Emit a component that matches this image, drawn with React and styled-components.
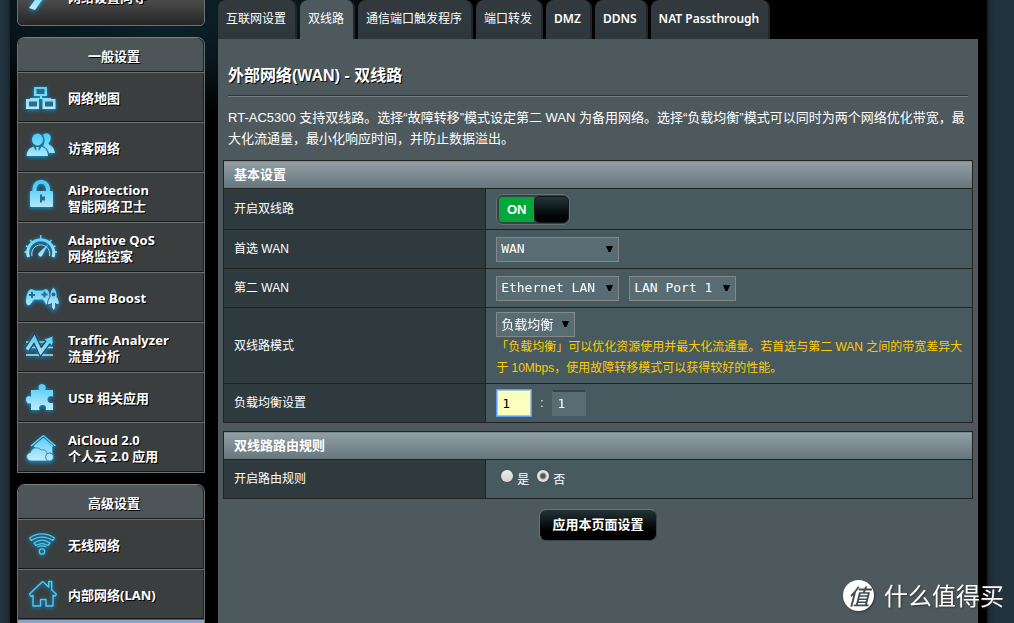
import React, { useState } from "react";
import styled, { createGlobalStyle, css } from "styled-components";

const CJK = '"Noto Sans CJK SC", sans-serif';
const UI = `"Noto Sans", ${CJK}`;
const BODY = `"Liberation Sans", ${CJK}`;
const MONO = `"DejaVu Sans Mono", "Noto Sans CJK SC", monospace`;

const GlobalStyle = createGlobalStyle`
  * { box-sizing: border-box; }
  body { margin: 0; background: #21333e; color: #fff; font: 12px/20px ${BODY}; }
  button, input, select { font: inherit; color: inherit; margin: 0; }
`;

const Page = styled.div`
  height: 100vh;
  overflow: hidden;
  padding: 0 26px 0 10px;
`;

const Shell = styled.div`
  display: flex;
  align-items: stretch;
  gap: 13px;
  height: 100%;
  padding: 0 9px 0 7px;
  border-right: 1px solid #1c1c1c;
  box-shadow: 0 0 5px 1px #131c22;
  background:
    radial-gradient(ellipse 60px 36px at 160px 30px, #0c2026, transparent),
    radial-gradient(ellipse 260px 115px at 150px 0, #0a2229 0, #08161b 60%, transparent),
    #000;
`;

const Sidebar = styled.nav`
  flex: 0 0 188px;
  display: flex;
  flex-direction: column;
  gap: 11px;
`;

const QuickSlot = styled.div`
  flex: none;
  display: flex;
  flex-direction: column;
  justify-content: flex-end;
  height: 26px;
  overflow: hidden;
`;

const QuickSetup = styled.a`
  flex: none;
  display: flex;
  align-items: center;
  gap: 9px;
  height: 58px;
  padding: 0 5px;
  border: 1px solid #6b7071;
  border-radius: 5px;
  background: linear-gradient(#777 0, #505050 50%, #262626);
  color: #fff;
  font: bold 13px/16px ${UI};
  text-decoration: none;
  text-shadow: 1px 1px 0 #000;
`;

const MenuGroup = styled.section`
  flex: none;
  border: 1px solid #6b7071;
  border-top-color: #7b8081;
  border-radius: 8px 8px 0 0;
  box-shadow: inset -1px 0 0 #1e2223;
`;

const MenuTitle = styled.h2`
  margin: 0;
  padding: 2px 0 0 6px;
  height: 34px;
  border-radius: 7px 7px 0 0;
  background: linear-gradient(#4f5658, #4b5457);
  box-shadow: inset -1px 0 0 #1e2223, inset 0 -1px 0 #17191a;
  font: bold 13px/32px ${UI};
  text-align: center;
  text-shadow: 1px 1px 0 #000;
`;

const MenuItem = styled.a`
  display: flex;
  align-items: center;
  gap: 9px;
  height: 50px;
  padding: 0 5px;
  border-top: 1px solid #6b7071;
  background: #3a3e3f;
  box-shadow: inset -1px 0 0 #1e2223, inset 0 -1px 0 #17191a;
  color: #fff;
  font: bold 13px/16px ${UI};
  text-decoration: none;
  text-shadow: 1px 1px 0 #000;
  white-space: pre-line;
`;

const NextItem = styled.div`
  height: 50px;
  border-top: 1px solid #4d5a6b;
  background: linear-gradient(#8ea4c4, #6b83a8);
`;

const Icon = styled.svg`
  flex: none;
  width: 36px;
  height: 36px;
  overflow: visible;
  filter: drop-shadow(0 1px 2px #00a0e8);
`;

const Main = styled.main`
  flex: 1;
  min-width: 0;
  display: flex;
  flex-direction: column;
`;

const TabBar = styled.div`
  display: flex;
  gap: 3px;
  height: 39px;
`;

const Tab = styled.a`
  padding: 9px 9px 0 8px;
  border-right: 2px solid #20282b;
  border-radius: 8px 8px 0 0;
  background: ${(p) => (p.$active ? "#4d595d" : "linear-gradient(#323a3e, #2e383c)")};
  color: #fff;
  font: ${(p) => (p.$latin ? 600 : 400)} 12px/20px ${UI};
  text-decoration: none;
  white-space: nowrap;
`;

const Panel = styled.div`
  flex: 1;
  padding: 25px 5px 0;
  background: #4d595d;
`;

const Intro = styled.header`
  padding: 0 5px;
`;

const Title = styled.h1`
  margin: 0;
  padding-bottom: 8px;
  border-bottom: 1px solid #2b373b;
  box-shadow: 0 1px 0 #748086;
  font: bold 16px/23px ${BODY};
  text-shadow: 1px 1px 0 #000;
`;

const Description = styled.p`
  margin: 11px 0;
  font: 13px/21px ${BODY};
`;

const SettingsTable = styled.table`
  width: 100%;
  margin-bottom: 8px;
  border-collapse: collapse;
  table-layout: fixed;
  border: 1px solid #222;
`;

const LabelCol = styled.col`
  width: 35%;
`;

const TableHead = styled.th`
  height: 28px;
  padding: 0 10px;
  border: 1px solid #222;
  background: linear-gradient(#92a0a5, #66757c);
  font: bold 13px/20px ${BODY};
  text-align: left;
`;

const cell = css`
  height: ${(p) => p.$height || 39}px;
  padding: 0 9px 0 10px;
  border: 1px solid #222;
  text-align: left;
  font-weight: normal;
`;

const RowLabel = styled.th`
  ${cell}
  background: #2f3a3e;
`;

const RowValue = styled.td`
  ${cell}
  background: #475a5f;
`;

const Line = styled.div`
  display: flex;
  align-items: center;
  gap: 10px;
`;

const Choices = styled(Line)`
  gap: 8px;
  padding-left: 5px;
`;

const Weights = styled(Line)`
  padding-left: 1px;
  gap: 9px;
`;

const Switch = styled.button`
  display: flex;
  align-items: stretch;
  width: 74px;
  height: 31px;
  padding: 1px 0 1px 2px;
  border: 1px solid #687275;
  border-radius: 7px;
  background: #364246;
  cursor: pointer;
`;

const SwitchText = styled.span`
  flex: 1;
  margin: 1px 0;
  border-radius: 3px 0 0 3px;
  background: #00a83a;
  font: bold 13px/25px "Liberation Sans", sans-serif;
  text-align: center;
`;

const SwitchKnob = styled.span`
  width: 35px;
  border: 1px solid #10181b;
  border-radius: 6px;
  background: linear-gradient(#24363d, #020405 75%);
`;

const SelectBox = styled.span`
  position: relative;
  display: inline-block;
  width: ${(p) => p.$width}px;
`;

const Select = styled.select`
  display: block;
  width: 100%;
  height: 25px;
  padding: 0 4px;
  border: 1px solid #878787;
  border-radius: 0;
  background: #576d73;
  appearance: none;
  font: 13px/20px ${MONO};
`;

const Arrow = styled.svg`
  position: absolute;
  right: 6px;
  top: 9px;
  width: 7px;
  height: 6px;
  pointer-events: none;
`;

const Hint = styled.div`
  color: #fc0;
  font: 12px/21px ${BODY};
`;

const Weight = styled.input`
  width: 34px;
  height: 26px;
  padding: 0 4px;
  border: 1px solid #576d73;
  border-top: 2px solid #39454a;
  background: #576d73;
  font: 13px/20px ${MONO};
  &:focus {
    outline: 1px solid #5b9bf5;
    border-color: #a8c4d8;
    border-width: 1px;
    background: #faffbd;
    color: #000;
  }
`;

const Choice = styled.label`
  display: flex;
  align-items: flex-start;
  gap: 4px;
  span { padding-top: 2px; line-height: 16px; }
`;

const Radio = styled.input`
  appearance: none;
  width: 12px;
  height: 12px;
  margin: 0;
  border-radius: 50%;
  background: ${(p) =>
    p.checked
      ? "radial-gradient(circle, #555 0 2px, #e2e2e2 4px)"
      : "linear-gradient(#ececec, #d4d4d4)"};
  box-shadow: 0 0 1px #222;
`;

const ApplyRow = styled.div`
  display: flex;
  justify-content: center;
  padding-top: 2px;
`;

const ApplyButton = styled.button`
  height: 32px;
  padding: 0 12px;
  border: 1px solid #65757a;
  border-right-color: #39454a;
  border-bottom-color: #39454a;
  border-radius: 7px;
  background: linear-gradient(#233338, #000 70%);
  font: bold 13px/20px ${BODY};
  cursor: pointer;
`;

const Watermark = styled.div`
  position: fixed;
  right: 10px;
  bottom: 10px;
  display: flex;
  align-items: center;
  gap: 10px;
  font: 24px/36px ${CJK};
  text-shadow: 1px 1px 2px #333;
`;

const Seal = styled.span`
  width: 31px;
  height: 31px;
  border-radius: 50%;
  background: #fff;
  box-shadow: 1px 1px 2px #333;
  color: #414b4f;
  font: italic 500 22px/30px ${CJK};
  text-align: center;
  text-shadow: none;
`;

const light = "url(#ice)";
const deep = "#2a6c8a";

const drawings = {
  wand: (
    <path d="M6 29 L22 7 L27 10 L12 31 Z" fill={light} />
  ),
  network: (
    <g>
      <path d="M11 7h13v9h-5v2h9v1h4.500v10h-13v-10h7v0h-18v0h7.500v10h-13v-10h4v-1h10v-2h-6z" fill={light} />
      <path d="M13.500 9h8v5h-8zM6 21.500h8v5H6zM22 21.500h8v5h-8z" fill={deep} />
    </g>
  ),
  guests: (
    <g fill={light}>
      <path d="M20 5c1-2 6-3 7.500 1 .8 3-.5 5.500-2 7 0 2 2 2 4 4 1.500 2 2 4 2.500 6h-6c-1-4-3-5.500-6-7 2-3 2.500-7 0-11z" />
      <ellipse cx="14.500" cy="9.500" rx="5.500" ry="6" />
      <path d="M3.500 26c.5-5 2.500-8 7-9.500l4 7 4-7c4.500 1.500 6 4.500 6.500 9.500z" />
      <path d="M13 17h3l-.5 2 1 5-2 2-2-2 1-5z" />
    </g>
  ),
  lock: (
    <g>
      <path d="M11.500 12V8.500a6.700 6.700 0 0 1 13.400 0V12" fill="none" stroke={light} strokeWidth="4" />
      <rect x="7" y="11" width="23" height="16" rx="1" fill={light} />
      <path d="M17 14.500h2v2h3v4h-3v2h-2z" fill={deep} />
    </g>
  ),
  gauge: (
    <g fill="none" stroke={light}>
      <path d="M5.500 27A13 13 0 1 1 30 27" strokeWidth="3" />
      <path d="M9 26a9 9 0 1 1 17.500 0" strokeWidth="1" />
      <path d="M17.700 5v4M7 10l2.500 2.500M28.500 10L26 12.500M1.500 22h4M30 22h4M3 16l3 1M32.500 16l-3 1" strokeWidth="1.500" />
      <path d="M24.500 15l-5 9.500a2 2 0 1 1-3-2z" fill={light} strokeWidth=".5" />
    </g>
  ),
  game: (
    <g>
      <path d="M7 9.500c3-1 4 1 5 1h7c2 0 2-2 5-1 2.500 1.500 3 9 3 12-.5 4-4 4-5 1l-2-3h-9l-3 4c-1.500 3-5 2-5-2 0-3 1-10 4-12z" fill={light} />
      <path d="M8 12h2v2h2v2h-2v2H8v-2H6v-2h2zM20.500 11.500h2v2h2v2h-2v2h-2v-2h-2v-2h2z" fill={deep} />
      <path d="M30.500 7c3 3 4 6 3.500 10 2 2 2.500 5 2 8l-3-1v3l-2.500 4-2-4v-3l-4 1c0-3 .5-6 2.500-8-.5-4 .5-7 3.500-10z" fill={light} stroke="#3a3e3f" strokeWidth=".8" />
      <circle cx="30.500" cy="14.500" r="2" fill={deep} />
      <path d="M28 23h1v6h-1zM32 23h1v6h-1z" fill={deep} />
    </g>
  ),
  traffic: (
    <g fill="none" stroke={light}>
      <path d="M3 12h27M3 17.500h27M3 25h27" strokeWidth="1.700" />
      <path d="M4 19.500L11.300 8.500l6.500 13.500L27 9.500" stroke="#3a3e3f" strokeWidth="6" />
      <path d="M4 19.500L11.300 8.500l6.500 13.500L26 11" strokeWidth="3.600" />
      <path d="M21.500 9.500L29.500 6.500 29 15z" fill={light} stroke="none" />
    </g>
  ),
  puzzle: (
    <path d="M8 10h8.500c-2-3-.5-6 2.500-6s5 3 3 6h8v6.500c-3-1.500-5.500 0-5.500 3s2.500 4.500 5.500 3V30h-7.500c1.500-3 0-5-2.800-5s-4.500 2-3 5H8v-7c-3 1.500-5-.5-5-3.500s2.500-4.500 5-2.500z" fill={light} />
  ),
  cloud: (
    <g fill={light}>
      <path d="M8 16L20.300 5.500 32.500 16M11 16.500l9.300-8L30 16.500" fill="none" stroke={light} strokeWidth="1.300" />
      <path d="M12 16l8.300-7 9 8v8H12z" />
      <path d="M8 31c-6-1-5.500-8-.5-8.500C8 18 15 16 18 20c5-1 6 2 6 4l3-1c4 0 4.500 7 0 8z" stroke={deep} strokeWidth=".7" />
      <circle cx="26.500" cy="27" r="4" stroke={deep} strokeWidth=".8" />
    </g>
  ),
  wifi: (
    <g fill="none" stroke="#4fc9f2" strokeWidth="1.300" strokeLinejoin="round">
      <path d="M6.500 11C14 5.500 24 5.500 31.500 11l-2 2.500c-6-4.500-15-4.500-21 0z" />
      <path d="M11 16c5-3.500 11-3.500 16 0l-2 2.500c-4-2.500-8-2.500-12 0z" />
      <path d="M14.500 20c3-1.500 6-1.500 9 0" />
      <circle cx="19" cy="24.500" r="2.700" />
    </g>
  ),
  home: (
    <path d="M6.500 17L19.700 4.500l6 5.500V4.500h3V13l4.800 4.200-1.500 2-2-1V29h-7v-6.500h-5.500V29H10V18.500l-2 1z" fill="none" stroke="#4fc9f2" strokeWidth="1.400" strokeLinejoin="round" />
  ),
};

function Glyph({ name }) {
  return (
    <Icon viewBox="0 0 36 36" aria-hidden="true">
      <defs>
        <linearGradient id="ice" gradientUnits="userSpaceOnUse" x1="0" y1="4" x2="0" y2="30">
          <stop offset="0" stopColor="#4ccbf8" />
          <stop offset="1" stopColor="#c0ebfb" />
        </linearGradient>
      </defs>
      {drawings[name]}
    </Icon>
  );
}

const general = [
  ["network", "网络地图"],
  ["guests", "访客网络"],
  ["lock", "AiProtection\n智能网络卫士"],
  ["gauge", "Adaptive QoS\n网络监控家"],
  ["game", "Game Boost"],
  ["traffic", "Traffic Analyzer\n流量分析"],
  ["puzzle", "USB 相关应用"],
  ["cloud", "AiCloud 2.0\n个人云 2.0 应用"],
];

const advanced = [
  ["wifi", "无线网络"],
  ["home", "内部网络(LAN)"],
];

const tabs = ["互联网设置", "双线路", "通信端口触发程序", "端口转发", "DMZ", "DDNS", "NAT Passthrough"];

function Menu({ title, items, children }) {
  return (
    <MenuGroup>
      <MenuTitle>{title}</MenuTitle>
      {items.map(([icon, text]) => (
        <MenuItem href="#" key={icon}>
          <Glyph name={icon} />
          <span>{text}</span>
        </MenuItem>
      ))}
      {children}
    </MenuGroup>
  );
}

function Dropdown({ id, width, option }) {
  return (
    <SelectBox $width={width}>
      <Select id={id} defaultValue={option}>
        <option>{option}</option>
      </Select>
      <Arrow viewBox="0 0 7 6" aria-hidden="true">
        <path d="M0 0h7L4.500 6h-2z" fill="#000" />
      </Arrow>
    </SelectBox>
  );
}

function Row({ label, htmlFor, height, children }) {
  return (
    <tr>
      <RowLabel scope="row" $height={height}>
        <label htmlFor={htmlFor}>{label}</label>
      </RowLabel>
      <RowValue $height={height}>{children}</RowValue>
    </tr>
  );
}

function Settings({ title, children }) {
  return (
    <SettingsTable>
      <colgroup>
        <LabelCol />
        <col />
      </colgroup>
      <thead>
        <tr>
          <TableHead colSpan={2}>{title}</TableHead>
        </tr>
      </thead>
      <tbody>{children}</tbody>
    </SettingsTable>
  );
}

export default function App() {
  const [dual, setDual] = useState(true);
  const [rules, setRules] = useState(false);
  return (
    <Page>
      <GlobalStyle />
      <Shell>
        <Sidebar>
          <QuickSlot>
            <QuickSetup href="#">
              <Glyph name="wand" />
              <span>网络设置向导</span>
            </QuickSetup>
          </QuickSlot>
          <Menu title="一般设置" items={general} />
          <Menu title="高级设置" items={advanced}>
            <NextItem />
          </Menu>
        </Sidebar>
        <Main>
          <TabBar>
            {tabs.map((name) => (
              <Tab href="#" key={name} $active={name === "双线路"} $latin={/^[A-Z]/.test(name)}>
                {name}
              </Tab>
            ))}
          </TabBar>
          <Panel>
            <Intro>
              <Title>外部网络(WAN) - 双线路</Title>
              <Description>
                RT-AC5300 支持双线路。选择“故障转移”模式设定第二 WAN
                为备用网络。选择“负载均衡”模式可以同时为两个网络优化带宽，最大化流通量，最小化响应时间，并防止数据溢出。
              </Description>
            </Intro>
            <Settings title="基本设置">
              <Row label="开启双线路" htmlFor="dual" height={41}>
                <Switch id="dual" role="switch" aria-checked={dual} onClick={() => setDual(!dual)}>
                  <SwitchText>ON</SwitchText>
                  <SwitchKnob />
                </Switch>
              </Row>
              <Row label="首选 WAN" htmlFor="primary">
                <Line>
                  <Dropdown id="primary" width={123} option="WAN" />
                </Line>
              </Row>
              <Row label="第二 WAN" htmlFor="second">
                <Line>
                  <Dropdown id="second" width={123} option="Ethernet LAN" />
                  <Dropdown id="port" width={107} option="LAN Port 1" />
                </Line>
              </Row>
              <Row label="双线路模式" htmlFor="mode" height={76}>
                <Line>
                  <Dropdown id="mode" width={79} option="负载均衡" />
                </Line>
                <Hint>
                  「负载均衡」可以优化资源使用并最大化流通量。若首选与第二 WAN
                  之间的带宽差异大于 10Mbps，使用故障转移模式可以获得较好的性能。
                </Hint>
              </Row>
              <Row label="负载均衡设置" htmlFor="weight1">
                <Weights>
                  <Weight id="weight1" defaultValue="1" autoFocus />
                  <span>:</span>
                  <Weight id="weight2" defaultValue="1" />
                </Weights>
              </Row>
            </Settings>
            <Settings title="双线路路由规则">
              <Row label="开启路由规则" htmlFor="rules-on">
                <Choices>
                  <Choice>
                    <Radio type="radio" name="rules" id="rules-on" checked={rules} onChange={() => setRules(true)} />
                    <span>是</span>
                  </Choice>
                  <Choice>
                    <Radio type="radio" name="rules" checked={!rules} onChange={() => setRules(false)} />
                    <span>否</span>
                  </Choice>
                </Choices>
              </Row>
            </Settings>
            <ApplyRow>
              <ApplyButton type="button">应用本页面设置</ApplyButton>
            </ApplyRow>
          </Panel>
        </Main>
      </Shell>
      <Watermark>
        <Seal>值</Seal>
        <span>什么值得买</span>
      </Watermark>
    </Page>
  );
}
